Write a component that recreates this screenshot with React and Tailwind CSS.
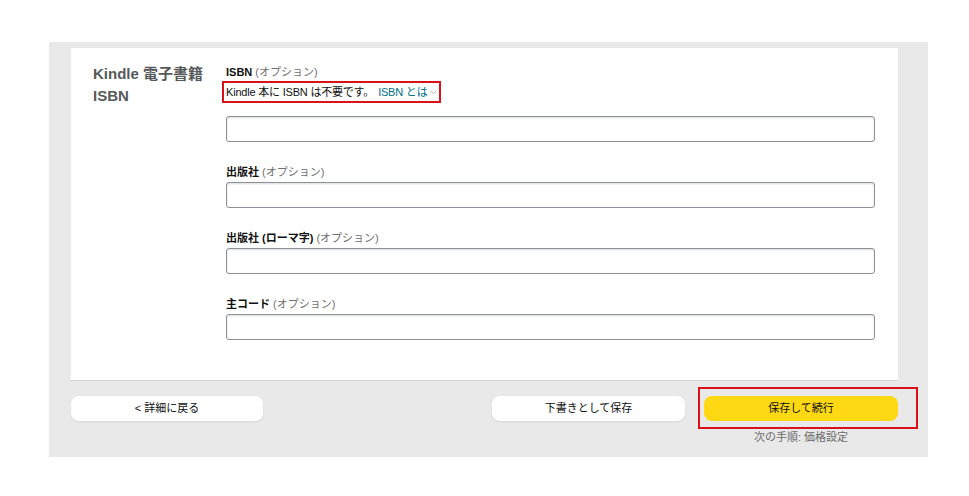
import { ChevronDown } from "lucide-react";

const font = {
  fontFamily: '"Liberation Sans", "Noto Sans CJK JP", sans-serif',
};

function Field({ label, first }) {
  return (
    <div className={first ? "" : "mt-[23px]"}>
      <div className="h-[14px] text-[11px] leading-[14px] text-[#111]">
        <span className="font-bold">{label}</span>{" "}
        <span className="text-[#6f6f6f]">(オプション)</span>
      </div>
      <input
        type="text"
        className="mt-[3px] block h-[26px] w-full rounded-[3px] border border-[#8d9096] bg-white shadow-[inset_0_1px_2px_rgba(15,17,17,0.15)] outline-none"
      />
    </div>
  );
}

export default function App() {
  return (
    <div className="min-h-screen bg-white pt-[42px]" style={font}>
      <div className="ml-[49px] h-[415px] w-[879px] bg-[#e9e9e9] pl-[22px] pr-[30px] pt-[6px]">
        <div className="flex h-[333px] border-b border-[#d5d5d5] bg-white pl-[22px] pr-[23px] pt-[17px]">
          <div className="-mt-[2px] w-[133px] text-[15px] font-bold leading-[22px] text-[#565959]">
            Kindle 電子書籍
            <br />
            ISBN
          </div>
          <div className="flex-1">
            <div className="h-[14px] text-[11px] leading-[14px] text-[#111]">
              <span className="font-bold">ISBN</span>{" "}
              <span className="text-[#6f6f6f]">(オプション)</span>
            </div>
            <div className="-ml-[4px] inline-flex h-[22px] items-center border-2 border-[#d9111a] pl-[2px] pr-[1px] text-[11px] tracking-[-0.2px] text-[#111]">
              Kindle 本に ISBN は不要です。
              <span className="ml-[4px] text-[#007185]">ISBN とは</span>
              <ChevronDown className="ml-[2px] h-[9px] w-[9px] text-[#999]" strokeWidth={2} />
            </div>
            <input
              type="text"
              className="mt-[13px] block h-[26px] w-full rounded-[3px] border border-[#8d9096] bg-white shadow-[inset_0_1px_2px_rgba(15,17,17,0.15)] outline-none"
            />
            <Field label="出版社" />
            <Field label="出版社 (ローマ字)" />
            <Field label="主コード" />
          </div>
        </div>

        <div className="mt-[15px] flex items-start text-[11px] text-[#0f1111]">
          <button className="h-[25px] w-[192px] rounded-lg bg-white shadow-[0_1px_2px_rgba(0,0,0,0.08)]">
            &lt; 詳細に戻る
          </button>
          <button className="ml-auto h-[25px] w-[193px] rounded-lg bg-white shadow-[0_1px_2px_rgba(0,0,0,0.08)]">
            下書きとして保存
          </button>
          <div className="ml-[19px] flex w-[194px] flex-col items-center">
            <div className="relative h-[25px] w-full">
              <button className="h-full w-full rounded-lg bg-[#ffd814]">
                保存して続行
              </button>
              <div className="pointer-events-none absolute -left-[6px] -right-[20px] -top-[9px] -bottom-[8px] border-2 border-[#d9111a]" />
            </div>
            <div className="mt-[8px] text-[11px] text-[#6b6b6b]">次の手順: 価格設定</div>
          </div>
        </div>
      </div>
    </div>
  );
}
